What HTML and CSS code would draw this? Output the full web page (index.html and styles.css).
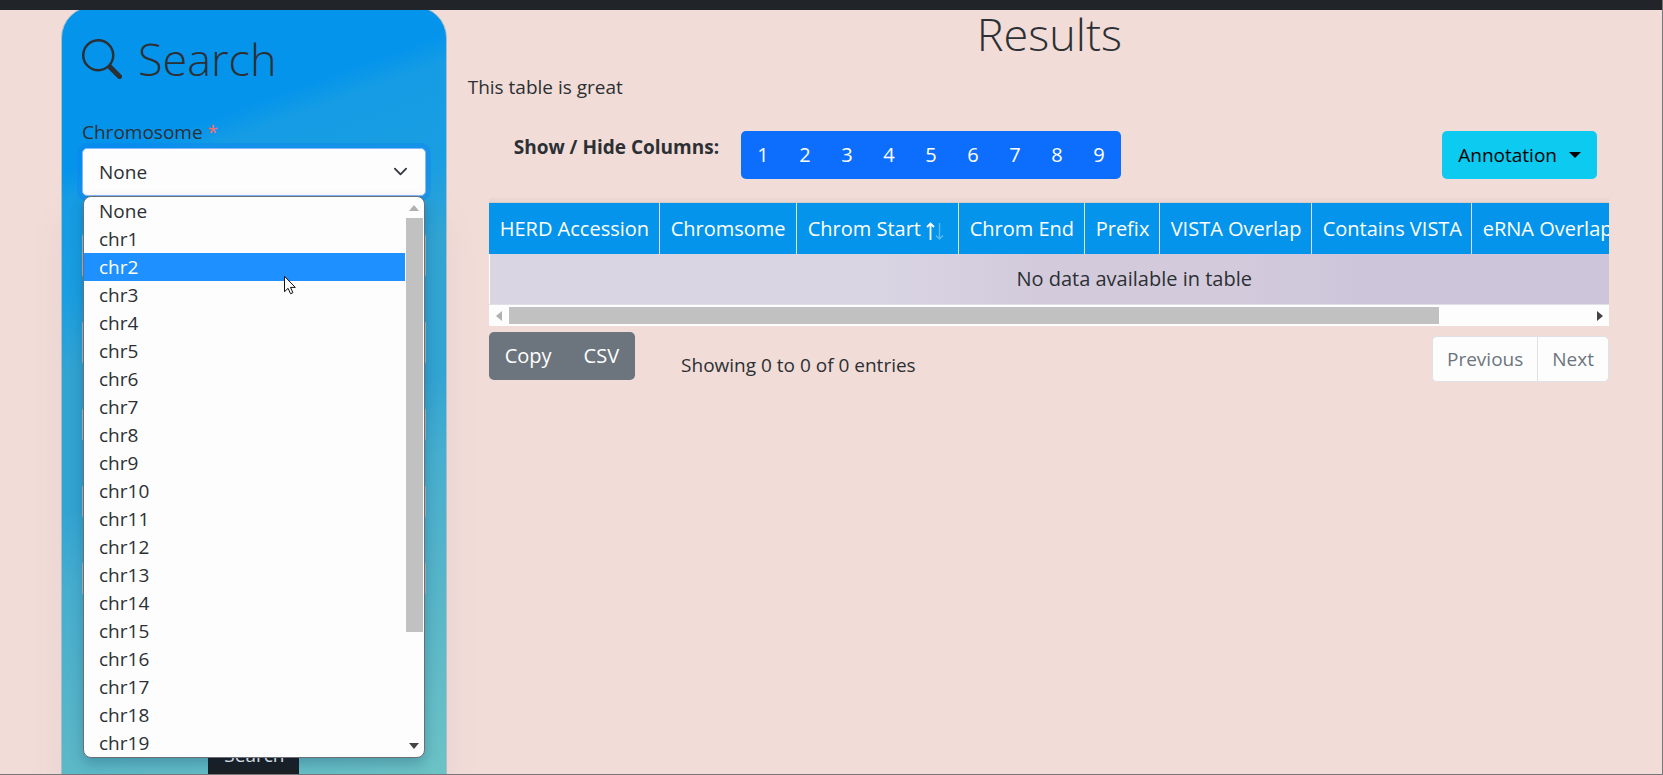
FILE: index.html
```html
<!DOCTYPE html>
<html lang="en">
<head>
<meta charset="utf-8">
<title>Search</title>
<link rel="stylesheet" href="styles.css">
</head>
<body>
<header class="topbar"></header>
<main class="layout">
  <form class="panel">
    <h1 class="title panel-title">
      <svg class="title-icon" viewBox="0 0 16 16" aria-hidden="true"><path fill="currentColor" d="M11.742 10.344a6.5 6.5 0 1 0-1.397 1.398h-.001c.03.04.062.078.098.115l3.85 3.85a1 1 0 0 0 1.415-1.414l-3.85-3.85a1.007 1.007 0 0 0-.115-.1zM12 6.5a5.5 5.5 0 1 1-11 0 5.5 5.5 0 0 1 11 0z"/></svg>
      Search
    </h1>
    <label class="label" for="chromosome">Chromosome <span class="required">*</span></label>
    <div class="combo">
      <select class="select" id="chromosome"><option>None</option></select>
      <svg class="chevron" viewBox="0 0 16 16" aria-hidden="true"><path d="m2 5 6 6 6-6" fill="none" stroke="currentColor" stroke-width="2" stroke-linecap="round" stroke-linejoin="round"/></svg>
      <div class="popup">
        <ul class="options" role="listbox" aria-label="Chromosome">
          <li class="option" role="option">None</li>
          <li class="option" role="option">chr1</li>
          <li class="option option-active" role="option" aria-selected="true">chr2</li>
          <li class="option" role="option">chr3</li>
          <li class="option" role="option">chr4</li>
          <li class="option" role="option">chr5</li>
          <li class="option" role="option">chr6</li>
          <li class="option" role="option">chr7</li>
          <li class="option" role="option">chr8</li>
          <li class="option" role="option">chr9</li>
          <li class="option" role="option">chr10</li>
          <li class="option" role="option">chr11</li>
          <li class="option" role="option">chr12</li>
          <li class="option" role="option">chr13</li>
          <li class="option" role="option">chr14</li>
          <li class="option" role="option">chr15</li>
          <li class="option" role="option">chr16</li>
          <li class="option" role="option">chr17</li>
          <li class="option" role="option">chr18</li>
          <li class="option" role="option">chr19</li>
        </ul>
        <div class="vscroll">
          <svg class="vscroll-arrow dim" viewBox="0 0 10 6" aria-hidden="true"><path fill="currentColor" d="M0 6 5 0l5 6z"/></svg>
          <div class="vscroll-track"><div class="vscroll-thumb"></div></div>
          <svg class="vscroll-arrow" viewBox="0 0 10 6" aria-hidden="true"><path fill="currentColor" d="M0 0h10L5 6z"/></svg>
        </div>
        <svg class="cursor" viewBox="0 0 12 19" aria-hidden="true"><path d="M.5.8v15.4l3.6-3.4 2.4 5.4 2.4-1-2.4-5.3h4.8z" fill="#fff" stroke="#111" stroke-width="1"/></svg>
      </div>
    </div>
    <div class="fields">
      <input class="field field-tall" aria-label="Start">
      <input class="field field-tall" aria-label="End">
      <input class="field" aria-label="Prefix">
      <input class="field" aria-label="VISTA">
      <input class="field" aria-label="eRNA">
    </div>
    <button class="btn submit" type="button">Search</button>
  </form>

  <section class="results">
    <h1 class="title results-title">Results</h1>
    <p class="intro">This table is great</p>
    <div class="toolbar">
      <strong class="toolbar-label">Show / Hide Columns:</strong>
      <div class="group group-primary">
        <button class="btn btn-num">1</button>
        <button class="btn btn-num">2</button>
        <button class="btn btn-num">3</button>
        <button class="btn btn-num">4</button>
        <button class="btn btn-num">5</button>
        <button class="btn btn-num">6</button>
        <button class="btn btn-num">7</button>
        <button class="btn btn-num">8</button>
        <button class="btn btn-num">9</button>
      </div>
      <button class="btn btn-info">Annotation <svg class="caret" viewBox="0 0 12 6" aria-hidden="true"><path fill="currentColor" d="M0 0h12L6 6z"/></svg></button>
    </div>
    <div class="table-area">
      <div class="table-clip">
        <table class="table">
          <colgroup><col class="w-acc"><col class="w-chrom"><col class="w-start"><col class="w-end"><col class="w-prefix"><col class="w-vista"><col class="w-contains"><col class="w-erna"><col></colgroup>
          <thead>
            <tr>
              <th>HERD Accession</th>
              <th>Chromsome</th>
              <th>Chrom Start <svg class="sort" viewBox="0 0 18 18" aria-hidden="true"><g fill="none" stroke="#fff"><path stroke-width="1.800" d="M4.500 18V1.500M1 5l3.500-3.500L8 5"/><path stroke-width="1.400" opacity=".35" d="M13.500 1v16M10 13.500l3.500 3.500 3.500-3.500"/></g></svg></th>
              <th>Chrom End</th>
              <th>Prefix</th>
              <th>VISTA Overlap</th>
              <th>Contains VISTA</th>
              <th>eRNA Overlap</th>
              <th></th>
            </tr>
          </thead>
          <tbody><tr><td colspan="9">No data available in table</td></tr></tbody>
        </table>
      </div>
      <div class="hscroll">
        <svg class="hscroll-arrow dim" viewBox="0 0 6 10" aria-hidden="true"><path fill="currentColor" d="M6 0v10L0 5z"/></svg>
        <div class="hscroll-track"><div class="hscroll-thumb"></div></div>
        <svg class="hscroll-arrow" viewBox="0 0 6 10" aria-hidden="true"><path fill="currentColor" d="M0 0v10l6-5z"/></svg>
      </div>
      <div class="table-footer">
        <div class="group group-secondary">
          <button class="btn">Copy</button>
          <button class="btn">CSV</button>
        </div>
        <span class="info">Showing 0 to 0 of 0 entries</span>
        <div class="pager">
          <button class="page" disabled>Previous</button>
          <button class="page" disabled>Next</button>
        </div>
      </div>
    </div>
  </section>
</main>
</body>
</html>
```

FILE: styles.css
```css
* { box-sizing: border-box; }

body {
  margin: 0;
  height: 100vh;
  display: flex;
  flex-direction: column;
  overflow: hidden;
  background: #f1dcd7;
  border-right: 1px solid #777;
  border-bottom: 1px solid #777;
  color: #2c3034;
  font: 19px/30px "Open Sans", "Noto Sans", sans-serif;
}

button, select, input { font: inherit; color: inherit; }

.topbar {
  flex: none;
  height: 10px;
  background: #212529;
  position: relative;
  z-index: 1;
}

.layout {
  flex: 1;
  min-height: 0;
  display: grid;
  grid-template-columns: 8fr 25fr;
  align-items: start;
  padding: 0 10px 0 61px;
}

.title {
  margin: 0;
  font-size: 45px;
  line-height: 60px;
  font-weight: 300;
}

/* Search panel */
.panel {
  margin-top: -4px;
  padding: 22px 20px 60px;
  border: 1px solid #a9bcc8;
  border-radius: 32px;
  background: linear-gradient(160deg, #0494ec 0%, #0494ec 17%, #159ce4 20%, #1a9ee2 30%, #32a4d2 38%, #32a4d2 52%, #46aecf 60%, #58b6c8 75%, #74c8c4 100%);
  box-shadow: 0 200px 40px -10px rgba(130, 110, 170, .13);
}

.panel-title {
  display: flex;
  align-items: center;
  gap: 16px;
  margin-bottom: 29px;
}

.title-icon { width: 40px; height: 40px; }

.label { display: block; line-height: 28px; margin-bottom: 2px; }
.required { color: #ff6b6b; }

.combo { position: relative; }

.select {
  display: block;
  width: 100%;
  height: 48px;
  padding: 0 16px;
  appearance: none;
  background: #fdfdfd;
  border: 1px solid #86b7fe;
  border-radius: 5px;
  box-shadow: 0 0 0 5px rgba(13, 125, 240, .35);
}

.chevron {
  position: absolute;
  right: 18px;
  top: 16px;
  width: 15px;
  height: 15px;
  color: #343a40;
}

.popup {
  position: absolute;
  z-index: 2;
  top: 48px;
  left: 1px;
  right: 1px;
  display: flex;
  overflow: hidden;
  background: #fdfdfd;
  border: 1px solid #6b6f74;
  border-radius: 8px;
  box-shadow: 0 6px 14px rgba(0, 40, 80, .25);
}

.options {
  flex: 1;
  margin: 0;
  padding: 0;
  list-style: none;
}

.option { padding-left: 15px; line-height: 28px; }
.option-active { background: #1e90ff; color: #fff; }

.vscroll {
  flex: none;
  width: 19px;
  padding: 8px 1px 8px 1px;
  display: flex;
  flex-direction: column;
  align-items: center;
}

.vscroll-arrow { flex: none; width: 10px; height: 6px; color: #444; }
.vscroll .dim, .hscroll .dim { color: #b0b0b0; }
.vscroll-track { flex: 1; align-self: stretch; padding: 7px 0; }
.vscroll-thumb { height: 80%; background: #c1c1c1; }

.cursor {
  position: absolute;
  left: 200px;
  top: 78px;
  width: 12px;
  height: 20px;
}

.fields {
  display: flex;
  flex-direction: column;
  gap: 40px;
  padding: 36px 0 134px;
}

.field {
  width: 100%;
  height: 37px;
  border: 1px solid #b5b5bb;
  border-radius: 5px;
  background: #c4c4ca;
}

.field-tall { height: 47px; }

.btn {
  height: 48px;
  padding: 0 16px;
  border: 0;
  border-radius: 5px;
  background: none;
  color: #fff;
}

.submit { display: block; width: 91px; margin: 0 auto; background: #1b1f24; }

/* Results */
.results { min-width: 0; padding: 0 0 0 21px; }
.results-title { text-align: center; padding-right: 21px; line-height: 48px; }
.intro { margin: 14px 0 29px; }

.toolbar {
  display: flex;
  align-items: flex-start;
  padding: 0 55px 0 46px;
}

.toolbar-label { margin: 1px 22px 0 0; }

.group { display: flex; border-radius: 5px; }
.group-primary { padding: 0 1px; background: #0d6efd; }
.group-secondary { background: #6c757d; font-size: 20px; }
.btn-num { width: 42px; padding: 0; font-size: 20px; }

.btn-info {
  display: flex;
  align-items: center;
  gap: 12px;
  margin-left: auto;
  background: #0dcaf0;
  color: #000;
}

.caret { width: 12px; height: 6px; }

.table-area { margin: 19px 43px 0 21px; }

.table-clip {
  overflow: hidden;
  padding-top: 4px;
  border-bottom: 1px solid #dee2e6;
  background: #ebd6d1;
}

.table {
  width: 1290px;
  table-layout: fixed;
  border-collapse: separate;
  border-spacing: 0;
  border-top: 1px solid #d3cbc8;
  font-size: 20px;
  white-space: nowrap;
}

.w-acc { width: 171px; }
.w-chrom { width: 137px; }
.w-start { width: 162px; }
.w-end { width: 126px; }
.w-prefix { width: 75px; }
.w-vista { width: 152px; }
.w-contains { width: 160px; }
.w-erna { width: 160px; }

.table th {
  height: 51px;
  padding: 0 0 0 11px;
  border-right: 1px solid #dee2e6;
  background: #0494ec;
  color: #fff;
  font-weight: 400;
  text-align: left;
}

.table td {
  height: 50px;
  padding: 0;
  border-left: 1px solid #fff;
  background: linear-gradient(90deg, #d9d5e3 30%, #d3cbdc 42%, #d3cbdc 58%, #cdc5da 68%);
  text-align: center;
}

.sort { width: 18px; height: 18px; vertical-align: -4px; }

.hscroll {
  display: flex;
  align-items: center;
  justify-content: space-between;
  height: 21px;
  padding: 0 6px 0 7px;
  background: #fdfdfd;
}

.hscroll-arrow { flex: none; width: 6px; height: 10px; color: #444; }
.hscroll-track { flex: 1; padding: 0 7px; }
.hscroll-thumb { width: 86%; height: 17px; background: #c1c1c1; }

.table-footer { display: flex; align-items: flex-start; padding-top: 6px; }
.info { margin: 18px 0 0 46px; }

.pager { display: flex; margin: 4px 0 0 auto; }

.page {
  height: 46px;
  padding: 0 14px;
  border: 1px solid #dee2e6;
  background: #fdfdfd;
  color: #6c757d;
}

.page:first-child { border-radius: 5px 0 0 5px; border-right: 0; }
.page:last-child { border-radius: 0 5px 5px 0; }
```
